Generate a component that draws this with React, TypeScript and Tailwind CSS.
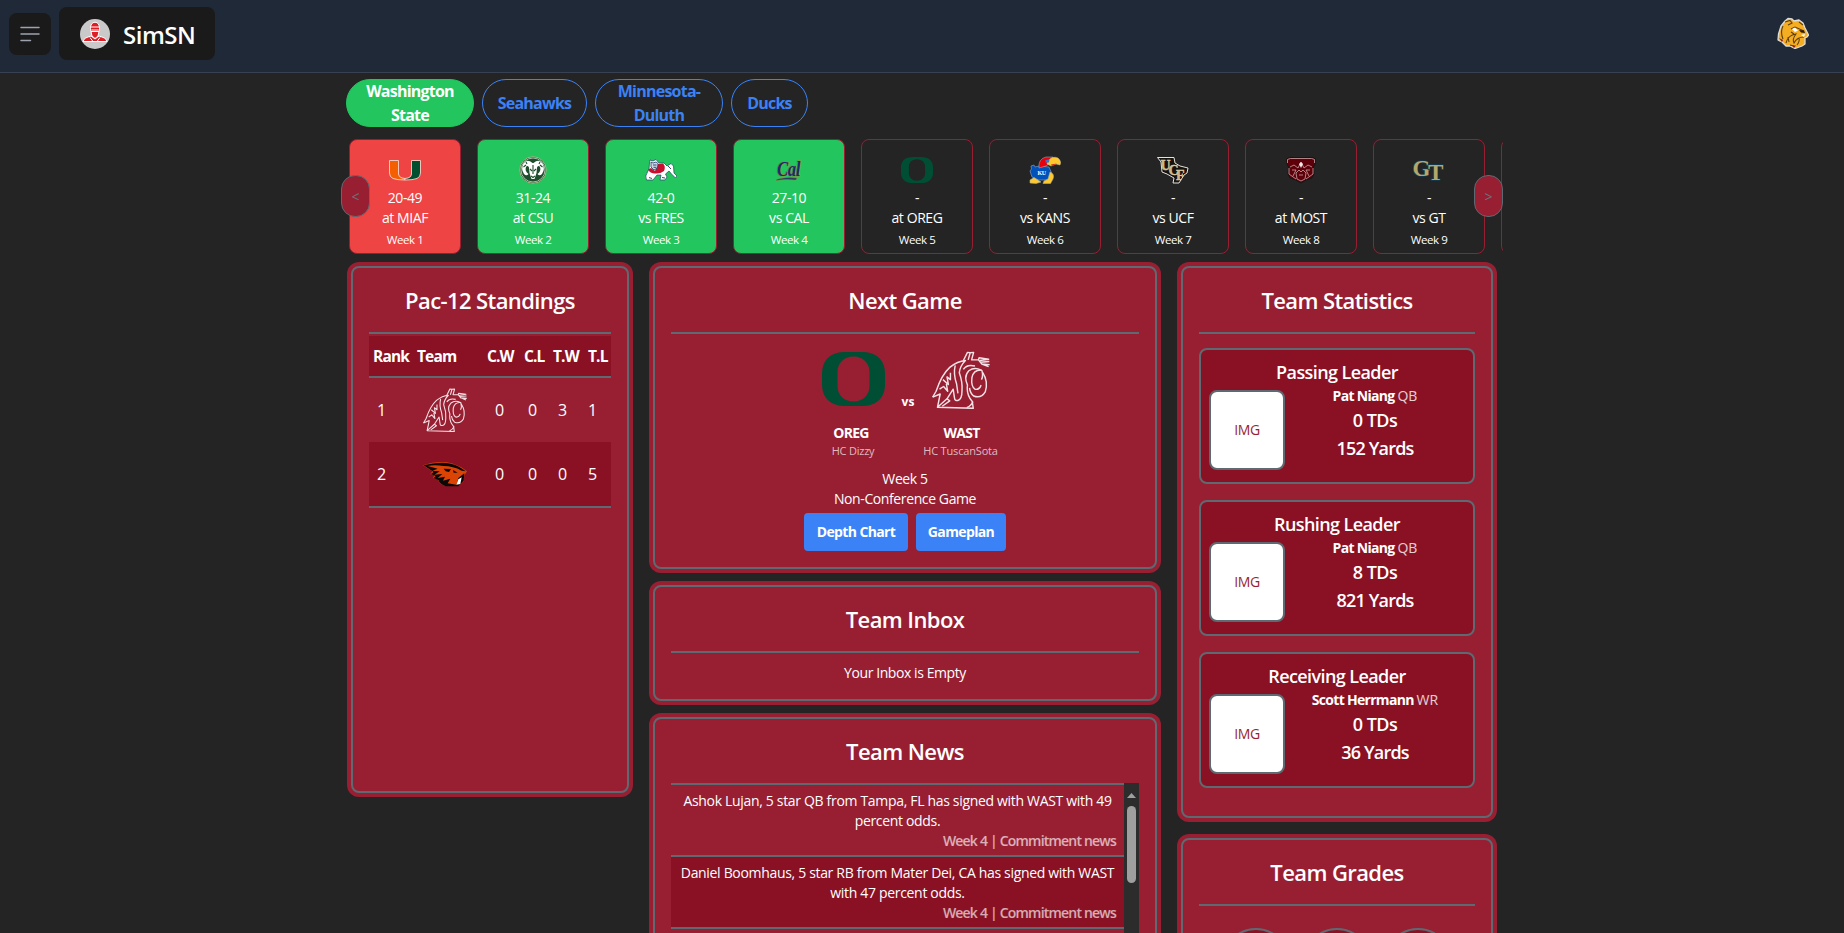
import type { ReactNode } from "react";

function Cougar({ className }: { className: string }) {
  return (
    <svg viewBox="0 0 170 170" className={className} fill="none" stroke="#f3e3e6" strokeWidth="4.200" strokeLinejoin="round">
      <path d="M2 135 L12 118 Q28 70 52 48 Q75 30 98 28 Q82 44 80 64 Q90 92 88 116 Q88 142 76 145 Q66 146 66 138 L62 112 L44 140 L52 146 L30 162" />
      <path d="M92 28 L104 4 L112 5 L106 26 M112 5 L122 4 L116 26 L136 26 L138 20 L166 24 L140 28 M168 31 L141 33 M169 40 L146 38 L136 26 M166 46 L146 38" />
      <path d="M2 135 L24 126 L16 165 L121 168 L118 148 Q100 128 104 100 Q92 74 108 58 Q124 46 144 56 M16 165 L44 140" />
      <path d="M146 56 Q122 54 117 78 Q114 104 126 112 Q138 115 144 100 M146 56 Q151 74 145 84" />
      <path d="M148 62 Q166 90 156 120 Q144 140 122 132 Q112 124 110 108 M102 166 Q116 160 120 148" />
      <path d="M32 84 L48 98 L44 76 L54 84 L54 64 M22 112 L34 104 L46 118 L42 96" />
      <path d="M92 54 Q102 38 126 44 M68 42 Q62 68 72 96 L76 124" />
    </svg>
  );
}

function Beaver() {
  return (
    <svg viewBox="0 0 132 76" className="h-[26px] w-11">
      <path d="M0 12 Q46 -4 86 6 Q112 14 132 30 L124 42 L122 60 L106 74 L66 74 Q48 68 44 54 L30 50 L34 42 L22 38 L28 30 Z" fill="#dc4405" />
      <path d="M2 12 Q46 0 84 7 Q110 14 128 30 L116 28 Q90 14 62 14 Q34 10 14 14 L44 22 L28 28 L50 30 L34 40 L58 38 L44 50 L66 46 L60 58 L82 52 L74 66 L100 70 L106 50 L124 36 L122 58 L106 75 L68 75 Q50 68 46 56 L32 50 L38 44 L24 38 L32 32 Z" fill="#0c0806" />
      <path d="M62 22 L84 23 L78 32 L68 30 Z M90 26 L104 34 L92 34 Z" fill="#0c0806" />
      <path d="M106 54 L116 48 L112 68 L100 70 Z" fill="#fff" />
    </svg>
  );
}

function OregonO({ className }: { className: string }) {
  return (
    <svg viewBox="0 0 63 54" preserveAspectRatio="none" className={className}>
      <path
        fillRule="evenodd"
        fill="#004f35"
        d="M24 0 H39 C55 0 63 8 63 22 V32 C63 46 55 54 39 54 H24 C8 54 0 46 0 32 V22 C0 8 8 0 24 0 Z M31.500 4.500 C22 4.500 15.500 11 15.500 20 V34 C15.500 43 22 49.500 31.500 49.500 C41 49.500 47.500 43 47.500 34 V20 C47.500 11 41 4.500 31.500 4.500 Z"
      />
    </svg>
  );
}

const logos: Record<string, ReactNode> = {
  miami: (
    <svg viewBox="0 0 32 32" className="size-8">
      <path d="M0.500 6.500 H9.500 V20 Q9.500 23 13 24 L16 24.500 V26 Q8 26 4 24.500 Q0.500 23 0.500 19 Z" fill="#f45f02" stroke="#f7d6cc" strokeWidth="0.900" />
      <path d="M31.500 6.500 H22.500 V20 Q22.500 23 19 24 L16 24.500 V26 Q24 26 28 24.500 Q31.500 23 31.500 19 Z" fill="#00502f" stroke="#f7d6cc" strokeWidth="0.900" />
    </svg>
  ),
  csu: (
    <svg viewBox="0 0 32 32" className="size-8">
      <circle cx="16" cy="16" r="13.300" fill="#1e4d2b" stroke="#a3b984" strokeWidth="1" />
      <circle cx="16" cy="16" r="12" fill="none" stroke="#dfe8dc" strokeWidth="0.700" />
      <path d="M15.500 9 Q10 4.500 6.500 9.500 Q3.500 15 7 20 Q9.500 22.500 11.500 20 Q7.500 17 9 13 Q10.500 11 12 13.500 L12.500 19 L14.500 25 H17.500 L19.500 19 L20 13.500 Q21.500 11 23 13 Q24.500 17 20.500 20 Q22.500 22.500 25 20 Q28.500 15 25.500 9.500 Q22 4.500 16.500 9 Z" fill="#fff" />
      <path d="M13 15 L15 17 M19 15 L17 17 M14 22 L16 23.500 L18 22 M16 11 V20 M6.500 13 L9 11 M25.500 13 L23 11 M9 8 L10 10 M23 8 L22 10" stroke="#1e4d2b" strokeWidth="1.100" fill="none" />
    </svg>
  ),
  fresno: (
    <svg viewBox="0 0 32 32" className="size-8">
      <path d="M4.500 9 L5 6 L8 7 L11 5.500 L14 9 L19 9 L22 12 L26 9.500 L28.500 12 L29 19 L32 22 L30.500 24 L26.500 20 L24 17 L20.500 20 L22 23 L20 26 L15 26 L16 21 L12 21 L8 26 L1.500 26 Q-0.500 22 2.500 18 L4 15 Z" fill="#fff" stroke="#27406f" strokeWidth="0.700" />
      <path d="M3 15.500 L6 14 L10 17 L13 10 L18 9.500 Q21 12 19 17 Q15 20 10 19.500 Q5 19.500 3 15.500 Z" fill="#c8102e" />
      <path d="M6 8 L8 9 L11 8 L13 9.500 L12.500 14 L9 16 L6 13 Z" fill="#cfd9e3" stroke="#1d3866" strokeWidth="0.800" />
      <path d="M8 11 H11.500 M8.500 13.300 H11.500 M4 23.500 L7 24.500 M17 23.500 L20 24 M23 12 L26 15" stroke="#1d3866" strokeWidth="0.900" />
    </svg>
  ),
  cal: (
    <svg viewBox="0 0 32 32" className="size-8">
      <text x="4" y="22" fontFamily="Liberation Serif, serif" fontStyle="italic" fontWeight="700" fontSize="20" textLength="23" lengthAdjust="spacingAndGlyphs" fill="#1d2a6b" stroke="#8f8f37" strokeWidth="1.200" paintOrder="stroke">Cal</text>
      <path d="M4 25.300 Q12 22.800 24 24 L23 26 Q12 24.800 3 26.500 Z" fill="#1d2a6b" stroke="#8f8f37" strokeWidth="0.500" />
    </svg>
  ),
  oregon: <OregonO className="my-[3px] h-[26px] w-8" />,
  kansas: (
    <svg viewBox="0 0 32 32" className="size-8">
      <path d="M10 12 L6 13 L5 11 L2 12 L2.500 15 L1 17 L3 23 L9 26 L19 26 L23 20 L20 13 Z" fill="#0051ba" stroke="#8ba7cf" strokeWidth="0.600" />
      <path d="M10 14 Q9 5 17 3 L24 3 L20 10 L17 12 Z" fill="#e8000d" stroke="#b9b9c9" strokeWidth="0.500" />
      <path d="M19 7 Q23 1.500 29 4 Q33 7 31 11 L27 10 L22 12 L18 10 Z" fill="#ffc82d" stroke="#c9c19c" strokeWidth="0.500" />
      <path d="M16.500 6 L20.500 5.500 L20 8.500 L16.500 8.500 Z" fill="#3f74c4" />
      <path d="M22 10.500 L28 9.500 L23 12 Z" fill="#d3211c" />
      <path d="M1 26 L5 23.500 L9 26 L12 28 L7 29.500 L1 29 Z M21 18 Q26 20 24 25 L21.500 29.500 L14 29.500 L15 27 L19 25 Z" fill="#ffc82d" stroke="#9fb0a7" strokeWidth="0.600" />
      <text x="8.500" y="20.500" fontFamily="Liberation Serif, serif" fontWeight="700" fontSize="6" fill="#fff">KU</text>
    </svg>
  ),
  ucf: (
    <svg viewBox="0 0 32 32" className="size-8">
      <path d="M0.500 3.500 H17 L18 9 L23 12 L31 14 L30 19 L27 21 L22 29 H16 L17 24 L10 20 L5 18 L4 8 Z" fill="#15130f" stroke="#e6e2d8" strokeWidth="1" />
      <text x="3.500 11.500 19" dy="16 5 5" fontFamily="Liberation Serif, serif" fontWeight="700" fontSize="14" fill="#cbb682" stroke="#e0d3b0" strokeWidth="0.400">UCF</text>
    </svg>
  ),
  most: (
    <svg viewBox="0 0 32 32" className="size-8">
      <path d="M1.500 5 Q4 2.500 9 3.500 H23 Q28 2.500 30.500 5 L30 10 L28.500 13 L29 20 L27 24 L21 26 L16 29 L11 26 L5 24 L3 20 L3.500 13 L2 10 Z" fill="#5e0009" stroke="#171414" strokeWidth="1" />
      <path d="M2.500 9 L2.500 5.500 Q5 4 9 4.500 H23 Q27 4 29.500 5.500 L29.500 9 M5 13 L9 11 L13 14 L16 8 L19 14 L23 11 L27 13 M4 14 L4 20 L11 25 M28 14 L28 20 L21 25 M7 16 L11 16 L8 22 M25 16 L21 16 L24 22 M12 25 L11 19 L14 16 L16 18 L18 16 L21 19 L20 25 L16 27 Z M14 21 H18" fill="none" stroke="#c9a3a6" strokeWidth="0.800" />
      <path d="M14 10 L16 8 L18 10 L16 14 Z" fill="#f2e9e9" />
    </svg>
  ),
  gt: (
    <svg viewBox="0 0 32 32" className="size-8">
      <text x="-0.500 15" dy="21.500 4" fontFamily="Liberation Serif, serif" fontWeight="700" fontSize="23" fill="#b9a568" stroke="#123a52" strokeWidth="1.400" paintOrder="stroke">GT</text>
    </svg>
  ),
};

const games = [
  { logo: "miami", score: "20-49", opp: "at MIAF", week: 1, tone: "bg-[#ef4444]" },
  { logo: "csu", score: "31-24", opp: "at CSU", week: 2, tone: "bg-[#22c55e]" },
  { logo: "fresno", score: "42-0", opp: "vs FRES", week: 3, tone: "bg-[#22c55e]" },
  { logo: "cal", score: "27-10", opp: "vs CAL", week: 4, tone: "bg-[#22c55e]" },
  { logo: "oregon", score: "-", opp: "at OREG", week: 5, tone: "" },
  { logo: "kansas", score: "-", opp: "vs KANS", week: 6, tone: "" },
  { logo: "ucf", score: "-", opp: "vs UCF", week: 7, tone: "" },
  { logo: "most", score: "-", opp: "at MOST", week: 8, tone: "" },
  { logo: "gt", score: "-", opp: "vs GT", week: 9, tone: "" },
];

const leaders = [
  { title: "Passing Leader", name: "Pat Niang", pos: "QB", tds: "0 TDs", yards: "152 Yards" },
  { title: "Rushing Leader", name: "Pat Niang", pos: "QB", tds: "8 TDs", yards: "821 Yards" },
  { title: "Receiving Leader", name: "Scott Herrmann", pos: "WR", tds: "0 TDs", yards: "36 Yards" },
];

const news = [
  { text: "Ashok Lujan, 5 star QB from Tampa, FL has signed with WAST with 49 percent odds.", tone: "" },
  { text: "Daniel Boomhaus, 5 star RB from Mater Dei, CA has signed with WAST with 47 percent odds.", tone: "bg-[#8a1124]" },
  { text: "", tone: "" },
];

function Panel({ title, className, children, rule = true }: { title: string; className: string; children?: ReactNode; rule?: boolean }) {
  return (
    <section className={`shrink-0 rounded-xl bg-[#981e32] p-1 ${className}`}>
      <div className="flex h-full flex-col rounded-lg border-2 border-[#5e6a71] px-4">
        <h2 className="flex h-16 shrink-0 items-center justify-center text-[22px] font-semibold tracking-[-0.027em]">{title}</h2>
        {rule && <div className="h-0.5 shrink-0 bg-[#5e6a71]" />}
        {children}
      </div>
    </section>
  );
}

function Pill({ children, className }: { children: ReactNode; className: string }) {
  return (
    <button className={`flex h-12 items-center justify-center rounded-3xl border text-center text-base leading-6 font-bold tracking-[-0.048em] ${className}`}>
      {children}
    </button>
  );
}

function StandingsRow({ rank, logo, values, tone }: { rank: number; logo: ReactNode; values: number[]; tone: string }) {
  return (
    <div className={`grid h-16 grid-cols-[30px_96px_33px_30px_30px_23px] items-center text-base ${tone}`}>
      <span className="pl-2">{rank}</span>
      <span className="flex justify-center pr-[5px]">{logo}</span>
      {values.map((v, i) => (
        <span key={i}>{v}</span>
      ))}
    </div>
  );
}

export default function App() {
  return (
    <div className="h-screen overflow-hidden bg-[#242424] font-['Open_Sans',sans-serif] text-white">
      <header className="flex h-[73px] justify-between border-b border-[#374151] bg-[#1f2937]">
        <div className="flex">
          <button className="mt-[13px] ml-[9px] flex size-[42px] items-center justify-center rounded-lg bg-[#1a1a1a]">
            <svg viewBox="0 0 20 16" className="h-4 w-5" stroke="#9ca3af" strokeWidth="1.500" strokeLinecap="round">
              <path d="M1 1.500 H19 M1 8 H19 M1 14.500 H10.500" />
            </svg>
          </button>
          <div className="mt-[7px] ml-2 flex h-[53px] w-[156px] items-center rounded-lg bg-[#1a1a1a] pl-[21px]">
            <svg viewBox="0 0 30 30" className="size-[30px]">
              <circle cx="15" cy="15" r="15" fill="#c9c9c9" />
              <g fill="#dc1f26" stroke="#fff" strokeWidth="1">
                <path d="M3 22.500 Q4 18.500 8 18 L11 17 L15 20 L19 17 L22 18 Q26 18.500 27 22.500 Z" />
                <path d="M11 12.500 H19 L18 17 L15 19.500 L12 17 Z" />
                <path d="M10.500 9.500 Q10.500 3.500 15 3.200 Q19.500 3.500 19.500 9.500 L19 12.500 H11 Z" />
              </g>
              <path d="M11 8 H19 M11.500 11 H18.500 M10 18.500 L13 22.500 M20 18.500 L17 22.500" stroke="#fff" strokeWidth="1" />
            </svg>
            <span className="pt-0.5 pl-[13px] text-2xl font-semibold tracking-[-0.02em]">SimSN</span>
          </div>
        </div>
        <svg viewBox="0 0 32 32" className="mt-[17px] mr-[35px] size-8">
          <path d="M8 4 L11 1.500 L15 2 L17 4 L22 3 L26 6 L28 11 L31.500 18 L30 20 L28 21 L28 27 L25 29 L18 31.500 L13 29 L9 29 L5 25 L1 23 L1.500 17 L4 9 Z" fill="#f5ae22" stroke="#dedcd8" strokeWidth="1.300" strokeLinejoin="round" />
          <path d="M8 5 L13 3.500 L15 6 L11 8 M6 9 Q3 15 6 22 M14 12 L18 10 L27 14 M9 26 Q11 18 19 17 Q15 22 17 26 Q20 20 27 20 M11 20 L12 25 M22 5 L26 8 M20 28 Q23 24 22 21 M14 15 L17 17 M13 28 L17 29" fill="none" stroke="#5e3f12" strokeWidth="1.100" />
          <path d="M15 12 L18 10.500 L21 13.500 L18 15 Z M24 18 L28 17 L27 20 Z" fill="#fff" />
          <path d="M22 13 L27 13.500 L28 16 L24 15.500 Z" fill="#26190f" />
          <path d="M2 21 L6 23 L5 25 Z M15 28.500 L19 28.500 L17 31 Z" fill="#8d1d22" />
        </svg>
      </header>

      <main className="mx-auto w-[1162px] pt-1.5">
        <nav className="flex gap-2 pl-[5px]">
          <Pill className="w-32 border-[#22c55e] bg-[#22c55e]"><span>Washington<br />State</span></Pill>
          <Pill className="w-[105px] border-[#3b82f6] text-[#3b82f6]">Seahawks</Pill>
          <Pill className="w-32 border-[#3b82f6] text-[#3b82f6]"><span>Minnesota-<br />Duluth</span></Pill>
          <Pill className="w-[77px] border-[#3b82f6] text-[#3b82f6]">Ducks</Pill>
        </nav>

        <div className="relative mt-3 h-[115px]">
          <div className="flex h-full gap-4 overflow-hidden pl-2">
            {games.map((g) => (
              <div key={g.week} className={`flex w-28 shrink-0 flex-col items-center rounded-lg border border-[#981e32] pt-3.5 text-sm leading-5 tracking-[-0.03em] ${g.tone}`}>
                <div className="mb-0.5 h-8">{logos[g.logo]}</div>
                <span>{g.score}</span>
                <span>{g.opp}</span>
                <span className="pt-1 text-[11.500px] leading-4 font-medium">Week {g.week}</span>
              </div>
            ))}
            <div className="w-28 shrink-0 rounded-lg border border-[#981e32]" />
          </div>
          <button className="absolute top-9 left-0 h-[42px] w-[29px] rounded-[14px] border border-[#5e6a71] bg-[#981e32] pt-0.5 text-sm text-[#6b747b]">&lt;</button>
          <button className="absolute top-9 right-0 h-[42px] w-[29px] rounded-[14px] border border-[#5e6a71] bg-[#981e32] pt-0.5 text-sm text-[#6b747b]">&gt;</button>
        </div>

        <div className="mt-2 flex gap-4 px-1.5">
          <Panel title="Pac-12 Standings" className="h-[535px] w-[286px]">
            <div className="mt-0.5 grid h-[42px] shrink-0 grid-cols-[44px_70px_37px_29px_35px_22px] items-center border-b-2 border-[#5e6a71] bg-[#8a1124] pt-0.5 pl-1 text-[15.500px] font-bold tracking-[-0.055em]">
              <span>Rank</span>
              <span>Team</span>
              <span>C.W</span>
              <span>C.L</span>
              <span>T.W</span>
              <span>T.L</span>
            </div>
            <StandingsRow rank={1} logo={<Cougar className="size-11" />} values={[0, 0, 3, 1]} tone="" />
            <StandingsRow rank={2} logo={<Beaver />} values={[0, 0, 0, 5]} tone="bg-[#8a1124]" />
            <div className="h-0.5 bg-[#5e6a71]" />
          </Panel>

          <div className="flex flex-col gap-2">
            <Panel title="Next Game" className="h-[311px] w-[512px]">
              <div className="flex justify-center pt-[17px]">
                <div className="flex w-[85px] flex-col items-center">
                  <div className="flex h-[66px] items-start pt-px"><OregonO className="h-[54px] w-[63px]" /></div>
                  <span className="pt-1.5 pr-1 text-sm leading-5 font-bold tracking-[-0.05em]">OREG</span>
                  <span className="text-[11px] leading-4 tracking-[-0.02em] text-white/70">HC Dizzy</span>
                </div>
                <span className="w-6 pt-[43px] pl-px text-center text-xs leading-4 font-bold">vs</span>
                <div className="flex w-20 flex-col items-center pl-0.5">
                  <div className="h-[66px]"><Cougar className="size-[58px]" /></div>
                  <span className="pt-1.5 pl-0.5 text-sm leading-5 font-bold tracking-[-0.05em]">WAST</span>
                  <span className="text-[11px] leading-4 tracking-[-0.015em] whitespace-nowrap text-white/70">HC TuscanSota</span>
                </div>
              </div>
              <div className="pt-[10px] text-center text-sm leading-5 tracking-[-0.028em]">
                <p>Week 5</p>
                <p>Non-Conference Game</p>
              </div>
              <div className="mt-1 flex justify-center gap-2 text-sm font-bold tracking-[-0.045em]">
                <button className="h-[38px] w-[104px] rounded bg-[#3b82f6]">Depth Chart</button>
                <button className="h-[38px] w-[90px] rounded bg-[#3b82f6]">Gameplan</button>
              </div>
            </Panel>

            <Panel title="Team Inbox" className="h-[124px] w-[512px]">
              <p className="pt-[10px] text-center text-sm leading-5 tracking-[-0.03em]">Your Inbox is Empty</p>
            </Panel>

            <Panel title="Team News" className="h-[260px] w-[512px]" rule={false}>
              <div className="flex min-h-0 flex-1">
                <div className="w-[453px] text-sm leading-5 tracking-[-0.023em]">
                  {news.map((n, i) => (
                    <div key={i} className={`h-[72px] border-t-2 border-[#5e6a71] px-2 pt-1.5 ${n.tone}`}>
                      <p className="text-center">{n.text}</p>
                      {n.text && <p className="text-right font-semibold tracking-[-0.057em] text-white/65">Week 4 | Commitment news</p>}
                    </div>
                  ))}
                </div>
                <div className="flex w-[15px] flex-col items-center bg-[#2c2c2c] pt-2.5">
                  <svg viewBox="0 0 9 5" className="h-[5px] w-[9px]"><path d="M0 5 L4.500 0 L9 5 Z" fill="#9f9f9f" /></svg>
                  <div className="mt-2 h-[77px] w-[9px] rounded-full bg-[#9f9f9f]" />
                </div>
              </div>
            </Panel>
          </div>

          <div className="flex flex-col gap-3">
            <Panel title="Team Statistics" className="h-[560px] w-80">
              <div className="flex flex-col gap-4 pt-3.5">
                {leaders.map((l) => (
                  <div key={l.title} className="h-[136px] rounded-lg border-2 border-[#5e6a71] bg-[#8a1124] pt-2">
                    <h3 className="text-center text-lg leading-7 font-semibold tracking-[-0.033em]">{l.title}</h3>
                    <div className="flex pl-2">
                      <div className="mt-1 flex h-20 w-[76px] items-center justify-center rounded-lg border-2 border-[#5e6a71] bg-white text-sm tracking-[-0.03em] text-[#981e32]">IMG</div>
                      <div className="flex-1 pr-2 text-center tracking-[-0.035em]">
                        <p className="text-sm leading-5 font-bold tracking-[-0.05em]">{l.name} <span className="font-normal tracking-normal text-white/80">{l.pos}</span></p>
                        <p className="text-lg leading-7 font-semibold">{l.tds}</p>
                        <p className="text-lg leading-7 font-semibold tracking-[-0.045em]">{l.yards}</p>
                      </div>
                    </div>
                  </div>
                ))}
              </div>
            </Panel>

            <Panel title="Team Grades" className="h-[260px] w-80">
              <div className="flex justify-center gap-[13px] pt-[22px]">
                {[0, 1, 2].map((i) => (
                  <div key={i} className="size-[68px] rounded-full border-2 border-[#5e6a71] bg-[#8a1124]" />
                ))}
              </div>
            </Panel>
          </div>
        </div>
      </main>
    </div>
  );
}
